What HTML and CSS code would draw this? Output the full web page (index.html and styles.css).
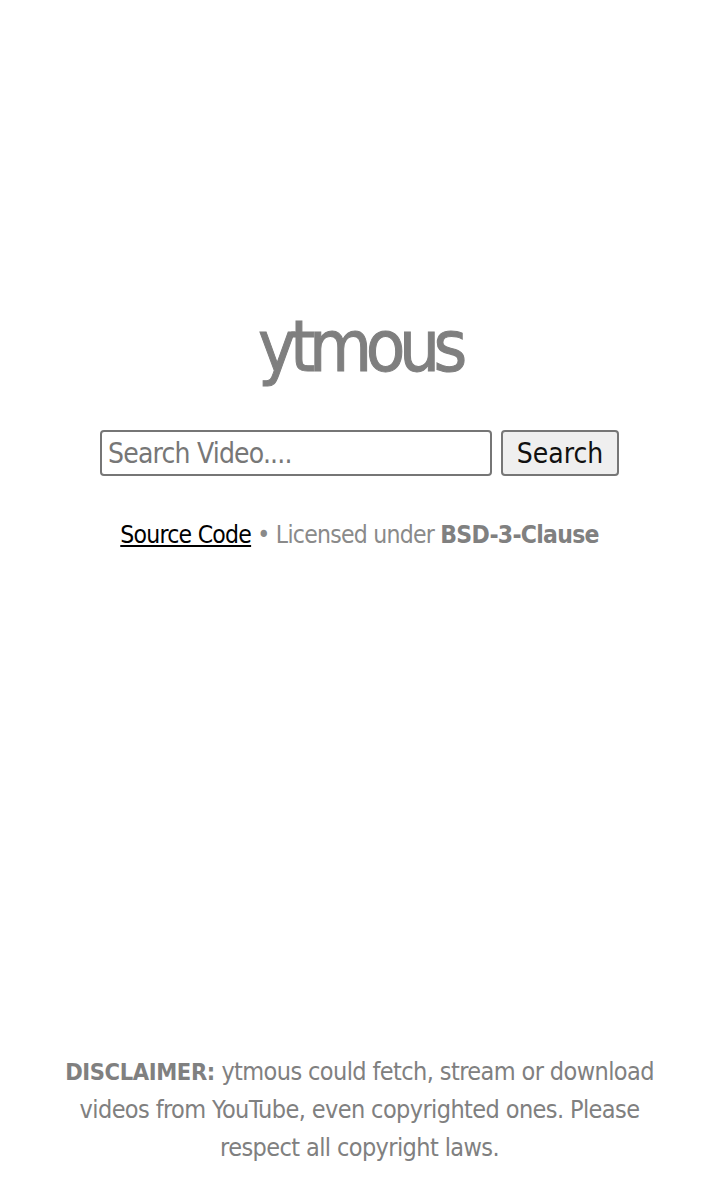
FILE: index.html
```html
<!DOCTYPE html>
<html lang="en">
<head>
<meta charset="utf-8">
<title>ytmous</title>
<link rel="stylesheet" href="styles.css">
</head>
<body>
<div class="page">
  <main class="main">
    <h1 class="title">ytmous</h1>
    <form class="search">
      <input class="search-input" type="text" placeholder="Search Video....">
      <button class="search-btn" type="button">Search</button>
    </form>
    <p class="links"><a class="src" href="#">Source Code</a> • Licensed under <b>BSD-3-Clause</b></p>
  </main>
  <footer class="disclaimer">
    <b class="label">DISCLAIMER:</b> ytmous could fetch, stream or download videos from YouTube, even copyrighted ones. Please respect all copyright laws.
  </footer>
</div>
</body>
</html>
```
FILE: styles.css
```css
html, body {
  margin: 0;
  padding: 0;
  background: #fff;
}
body {
  font-family: "DejaVu Sans Condensed", "DejaVu Sans", sans-serif;
  color: #808080;
}
.page {
  min-height: 1202px;
  display: flex;
  flex-direction: column;
  align-items: center;
}
.main {
  margin-top: 306px;
  display: flex;
  flex-direction: column;
  align-items: center;
}
.title {
  margin: 0;
  font-size: 72px;
  font-weight: 500;
  line-height: 80px;
  letter-spacing: -6.4px;
  color: #7f7f7f;
  -webkit-text-stroke: 1px #7f7f7f;
}
.search {
  display: flex;
  gap: 9px;
  margin-top: 44px;
}
.search-input {
  box-sizing: border-box;
  width: 392px;
  height: 46px;
  border: 2px solid #767676;
  border-radius: 4px;
  padding: 0 6px;
  font-family: inherit;
  font-size: 28px;
  letter-spacing: -0.8px;
  color: #222;
}
.search-input::placeholder {
  color: #777;
}
.search-btn {
  box-sizing: border-box;
  width: 118px;
  height: 46px;
  border: 2px solid #767676;
  border-radius: 4px;
  background: #efefef;
  font-family: inherit;
  font-size: 28px;
  color: #111;
  padding: 0;
}
.links {
  margin: 44px 0 0;
  font-size: 24.5px;
  letter-spacing: -0.75px;
  color: #8a8a8a;
}
.links .src {
  color: #000;
}
.links b {
  color: #808080;
  font-weight: 700;
}
.disclaimer {
  margin-top: auto;
  margin-bottom: 35px;
  width: 620px;
  text-align: center;
  font-size: 25px;
  line-height: 38px;
  letter-spacing: -0.6px;
  color: #808080;
}
.disclaimer .label {
  color: #808080;
  font-size: 23.5px;
  letter-spacing: -0.4px;
}
```
